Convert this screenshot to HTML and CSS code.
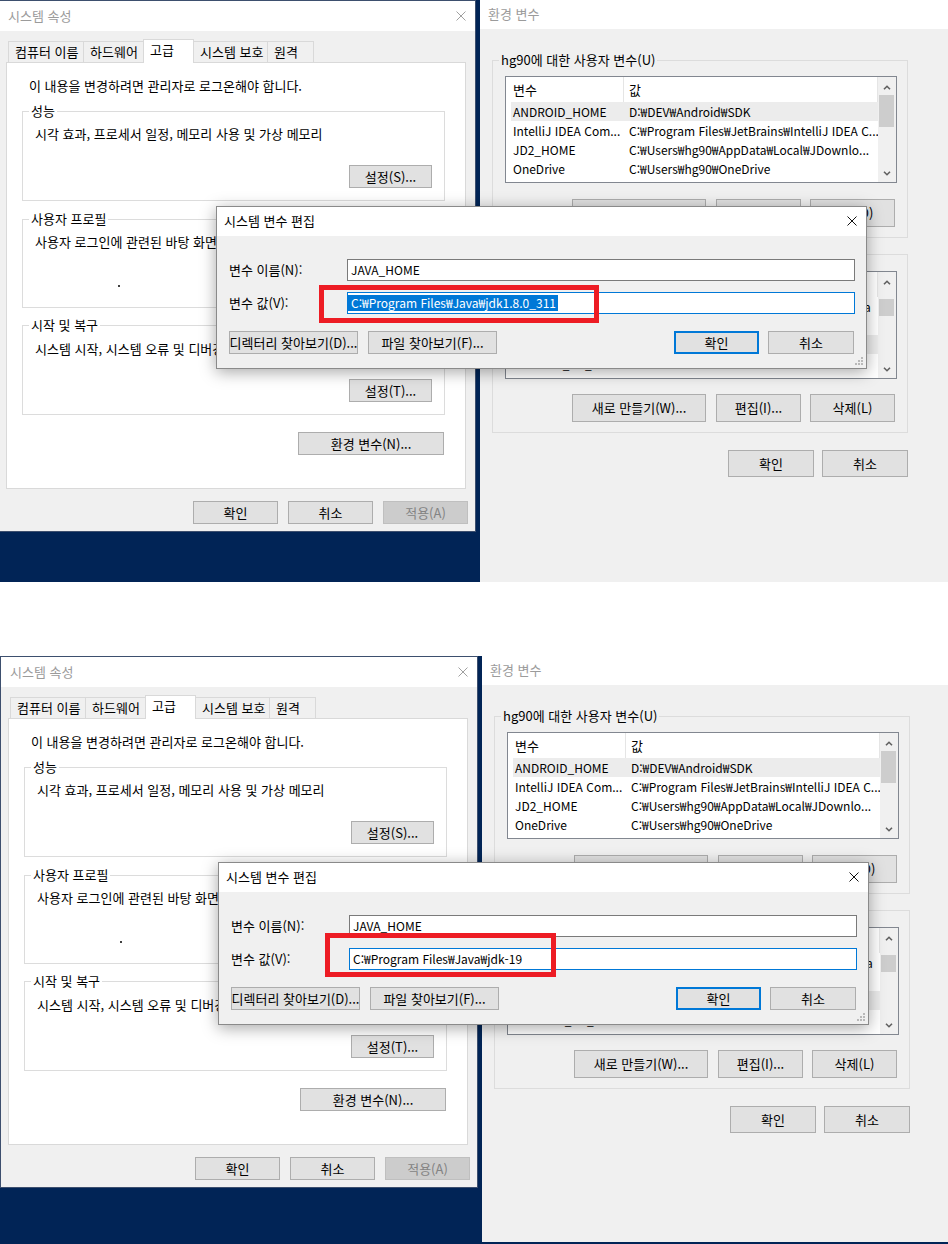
FILE: index.html
```html
<!DOCTYPE html>
<html lang="ko">
<head>
<meta charset="utf-8">
<title>시스템 변수 편집 - JAVA_HOME</title>
<link rel="stylesheet" href="styles.css">
</head>
<body>

<section class="shot shot-a">
  <div class="desk">
    <div class="win sys">
      <div class="titlebar sys-title">
        <span class="title-text">시스템 속성</span>
        <svg class="close" viewBox="0 0 10 10"><path d="M0.5 0.5L9.5 9.5M9.5 0.5L0.5 9.5"/></svg>
      </div>
      <div class="sys-body">
        <div class="tabs">
          <div class="tab t1">컴퓨터 이름</div>
          <div class="tab t2">하드웨어</div>
          <div class="tab t3 on">고급</div>
          <div class="tab t4">시스템 보호</div>
          <div class="tab t5">원격</div>
        </div>
        <div class="tabpanel">
          <p class="note">이 내용을 변경하려면 관리자로 로그온해야 합니다.</p>
          <div class="group g-perf">
            <div class="glabel">성능</div>
            <p class="gtext">시각 효과, 프로세서 일정, 메모리 사용 및 가상 메모리</p>
            <div class="gactions"><button type="button" class="btn btn-s">설정(S)...</button></div>
          </div>
          <div class="group g-prof">
            <div class="glabel">사용자 프로필</div>
            <p class="gtext">사용자 로그인에 관련된 바탕 화면 설정</p>
            <div class="gactions split"><span class="speck"></span><button type="button" class="btn btn-s">설정(E)...</button></div>
          </div>
          <div class="group g-boot">
            <div class="glabel">시작 및 복구</div>
            <p class="gtext">시스템 시작, 시스템 오류 및 디버깅 정보</p>
            <div class="gactions"><button type="button" class="btn btn-s">설정(T)...</button></div>
          </div>
          <div class="envbtn-row"><button type="button" class="btn btn-env">환경 변수(N)...</button></div>
        </div>
        <div class="sys-foot">
          <button type="button" class="btn btn-f">확인</button>
          <button type="button" class="btn btn-f">취소</button>
          <button type="button" class="btn btn-f disabled">적용(A)</button>
        </div>
      </div>
    </div>

    <div class="win env">
      <div class="titlebar env-title"><span class="title-text">환경 변수</span></div>
      <div class="env-body">
        <div class="group eg1">
          <div class="glabel">hg90에 대한 사용자 변수(U)</div>
          <div class="list list-user">
            <div class="list-main">
              <div class="lhead"><span class="c1">변수</span><span class="c2">값</span></div>
              <div class="lrow sel"><span class="c1">ANDROID_HOME</span><span class="c2">D:₩DEV₩Android₩SDK</span></div>
              <div class="lrow"><span class="c1">IntelliJ IDEA Com...</span><span class="c2">C:₩Program Files₩JetBrains₩IntelliJ IDEA C...</span></div>
              <div class="lrow"><span class="c1">JD2_HOME</span><span class="c2">C:₩Users₩hg90₩AppData₩Local₩JDownlo...</span></div>
              <div class="lrow"><span class="c1">OneDrive</span><span class="c2">C:₩Users₩hg90₩OneDrive</span></div>
              <div class="lrow"><span class="c1">Path</span><span class="c2">C:₩Users₩hg90₩AppData₩Local₩Microsoft₩WindowsApps;...</span></div>
            </div>
            <div class="vscroll">
              <span class="arr up"><svg viewBox="0 0 8 5"><path d="M1 4.3L4 1.3L7 4.3"/></svg></span>
              <span class="thumb"></span>
              <span class="arr down"><svg viewBox="0 0 8 5"><path d="M1 0.7L4 3.7L7 0.7"/></svg></span>
            </div>
          </div>
          <div class="ebtns">
            <button type="button" class="btn btn-e w-new">새로 만들기(N)...</button>
            <button type="button" class="btn btn-e">편집(E)...</button>
            <button type="button" class="btn btn-e">삭제(D)</button>
          </div>
        </div>
        <div class="group eg2">
          <div class="glabel">시스템 변수(S)</div>
          <div class="list list-sys">
            <div class="list-main">
              <div class="lhead"><span class="c1">변수</span><span class="c2">값</span></div>
              <div class="lrow"><span class="c1">DriverData</span><span class="c2">C:₩Windows₩System32₩Drivers₩DriverData</span></div>
              <div class="lrow"><span class="c1">GRADLE_HOME</span><span class="c2">C:₩Gradle₩gradle-7.4</span></div>
              <div class="lrow sel"><span class="c1">JAVA_HOME</span><span class="c2">C:₩Program Files₩Java₩jdk1.8.0_311</span></div>
              <div class="lrow"><span class="c1">NUMBER_OF_PROCESSORS</span><span class="c2">8</span></div>
              <div class="lrow"><span class="c1">OS</span><span class="c2">Windows_NT</span></div>
            </div>
            <div class="vscroll">
              <span class="arr up"><svg viewBox="0 0 8 5"><path d="M1 4.3L4 1.3L7 4.3"/></svg></span>
              <span class="thumb"></span>
              <span class="arr down"><svg viewBox="0 0 8 5"><path d="M1 0.7L4 3.7L7 0.7"/></svg></span>
            </div>
          </div>
          <div class="ebtns">
            <button type="button" class="btn btn-e w-new">새로 만들기(W)...</button>
            <button type="button" class="btn btn-e">편집(I)...</button>
            <button type="button" class="btn btn-e">삭제(L)</button>
          </div>
        </div>
        <div class="env-foot">
          <button type="button" class="btn btn-ef">확인</button>
          <button type="button" class="btn btn-ef">취소</button>
        </div>
      </div>
    </div>

    <div class="dlg">
      <div class="dlg-title">
        <span>시스템 변수 편집</span>
        <svg class="close dark" viewBox="0 0 10 10"><path d="M0.5 0.5L9.5 9.5M9.5 0.5L0.5 9.5"/></svg>
      </div>
      <div class="dlg-body">
        <div class="field"><span class="flabel">변수 이름(N):</span><div class="input">JAVA_HOME</div></div>
        <div class="field"><span class="flabel">변수 값(V):</span><div class="input focus"><span class="selected">C:₩Program Files₩Java₩jdk1.8.0_311</span></div></div>
        <div class="dlg-btns">
          <button type="button" class="btn btn-d wide">디렉터리 찾아보기(D)...</button>
          <button type="button" class="btn btn-d wide">파일 찾아보기(F)...</button>
          <span class="spacer"></span>
          <button type="button" class="btn btn-d ok default">확인</button>
          <button type="button" class="btn btn-d cancel">취소</button>
        </div>
      </div>
      <svg class="grip" viewBox="0 0 8 8"><path d="M6 0h2v2h-2zM3 3h2v2h-2zM6 3h2v2h-2zM0 6h2v2h-2zM3 6h2v2h-2zM6 6h2v2h-2z"/></svg>
    </div>

    <div class="mark mark-a"></div>
  </div>
</section>

<div class="gap"></div>

<section class="shot shot-b">
  <div class="desk desk-b">
    <div class="win sys">
      <div class="titlebar sys-title">
        <span class="title-text">시스템 속성</span>
        <svg class="close" viewBox="0 0 10 10"><path d="M0.5 0.5L9.5 9.5M9.5 0.5L0.5 9.5"/></svg>
      </div>
      <div class="sys-body">
        <div class="tabs">
          <div class="tab t1">컴퓨터 이름</div>
          <div class="tab t2">하드웨어</div>
          <div class="tab t3 on">고급</div>
          <div class="tab t4">시스템 보호</div>
          <div class="tab t5">원격</div>
        </div>
        <div class="tabpanel">
          <p class="note">이 내용을 변경하려면 관리자로 로그온해야 합니다.</p>
          <div class="group g-perf">
            <div class="glabel">성능</div>
            <p class="gtext">시각 효과, 프로세서 일정, 메모리 사용 및 가상 메모리</p>
            <div class="gactions"><button type="button" class="btn btn-s">설정(S)...</button></div>
          </div>
          <div class="group g-prof">
            <div class="glabel">사용자 프로필</div>
            <p class="gtext">사용자 로그인에 관련된 바탕 화면 설정</p>
            <div class="gactions split"><span class="speck"></span><button type="button" class="btn btn-s">설정(E)...</button></div>
          </div>
          <div class="group g-boot">
            <div class="glabel">시작 및 복구</div>
            <p class="gtext">시스템 시작, 시스템 오류 및 디버깅 정보</p>
            <div class="gactions"><button type="button" class="btn btn-s">설정(T)...</button></div>
          </div>
          <div class="envbtn-row"><button type="button" class="btn btn-env">환경 변수(N)...</button></div>
        </div>
        <div class="sys-foot">
          <button type="button" class="btn btn-f">확인</button>
          <button type="button" class="btn btn-f">취소</button>
          <button type="button" class="btn btn-f disabled">적용(A)</button>
        </div>
      </div>
    </div>

    <div class="win env">
      <div class="titlebar env-title"><span class="title-text">환경 변수</span></div>
      <div class="env-body">
        <div class="group eg1">
          <div class="glabel">hg90에 대한 사용자 변수(U)</div>
          <div class="list list-user">
            <div class="list-main">
              <div class="lhead"><span class="c1">변수</span><span class="c2">값</span></div>
              <div class="lrow sel"><span class="c1">ANDROID_HOME</span><span class="c2">D:₩DEV₩Android₩SDK</span></div>
              <div class="lrow"><span class="c1">IntelliJ IDEA Com...</span><span class="c2">C:₩Program Files₩JetBrains₩IntelliJ IDEA C...</span></div>
              <div class="lrow"><span class="c1">JD2_HOME</span><span class="c2">C:₩Users₩hg90₩AppData₩Local₩JDownlo...</span></div>
              <div class="lrow"><span class="c1">OneDrive</span><span class="c2">C:₩Users₩hg90₩OneDrive</span></div>
              <div class="lrow"><span class="c1">Path</span><span class="c2">C:₩Users₩hg90₩AppData₩Local₩Microsoft₩WindowsApps;...</span></div>
            </div>
            <div class="vscroll">
              <span class="arr up"><svg viewBox="0 0 8 5"><path d="M1 4.3L4 1.3L7 4.3"/></svg></span>
              <span class="thumb"></span>
              <span class="arr down"><svg viewBox="0 0 8 5"><path d="M1 0.7L4 3.7L7 0.7"/></svg></span>
            </div>
          </div>
          <div class="ebtns">
            <button type="button" class="btn btn-e w-new">새로 만들기(N)...</button>
            <button type="button" class="btn btn-e">편집(E)...</button>
            <button type="button" class="btn btn-e">삭제(D)</button>
          </div>
        </div>
        <div class="group eg2">
          <div class="glabel">시스템 변수(S)</div>
          <div class="list list-sys">
            <div class="list-main">
              <div class="lhead"><span class="c1">변수</span><span class="c2">값</span></div>
              <div class="lrow"><span class="c1">DriverData</span><span class="c2">C:₩Windows₩System32₩Drivers₩DriverData</span></div>
              <div class="lrow"><span class="c1">GRADLE_HOME</span><span class="c2">C:₩Gradle₩gradle-7.4</span></div>
              <div class="lrow sel"><span class="c1">JAVA_HOME</span><span class="c2">C:₩Program Files₩Java₩jdk-19</span></div>
              <div class="lrow"><span class="c1">NUMBER_OF_PROCESSORS</span><span class="c2">8</span></div>
              <div class="lrow"><span class="c1">OS</span><span class="c2">Windows_NT</span></div>
            </div>
            <div class="vscroll">
              <span class="arr up"><svg viewBox="0 0 8 5"><path d="M1 4.3L4 1.3L7 4.3"/></svg></span>
              <span class="thumb"></span>
              <span class="arr down"><svg viewBox="0 0 8 5"><path d="M1 0.7L4 3.7L7 0.7"/></svg></span>
            </div>
          </div>
          <div class="ebtns">
            <button type="button" class="btn btn-e w-new">새로 만들기(W)...</button>
            <button type="button" class="btn btn-e">편집(I)...</button>
            <button type="button" class="btn btn-e">삭제(L)</button>
          </div>
        </div>
        <div class="env-foot">
          <button type="button" class="btn btn-ef">확인</button>
          <button type="button" class="btn btn-ef">취소</button>
        </div>
      </div>
    </div>

    <div class="dlg">
      <div class="dlg-title">
        <span>시스템 변수 편집</span>
        <svg class="close dark" viewBox="0 0 10 10"><path d="M0.5 0.5L9.5 9.5M9.5 0.5L0.5 9.5"/></svg>
      </div>
      <div class="dlg-body">
        <div class="field"><span class="flabel">변수 이름(N):</span><div class="input">JAVA_HOME</div></div>
        <div class="field"><span class="flabel">변수 값(V):</span><div class="input focus plain">C:₩Program Files₩Java₩jdk-19</div></div>
        <div class="dlg-btns">
          <button type="button" class="btn btn-d wide">디렉터리 찾아보기(D)...</button>
          <button type="button" class="btn btn-d wide">파일 찾아보기(F)...</button>
          <span class="spacer"></span>
          <button type="button" class="btn btn-d ok default">확인</button>
          <button type="button" class="btn btn-d cancel">취소</button>
        </div>
      </div>
      <svg class="grip" viewBox="0 0 8 8"><path d="M6 0h2v2h-2zM3 3h2v2h-2zM6 3h2v2h-2zM0 6h2v2h-2zM3 6h2v2h-2zM6 6h2v2h-2z"/></svg>
    </div>

    <div class="mark mark-b"></div>
  </div>
</section>

</body>
</html>
```

FILE: styles.css
```css
* { box-sizing: border-box; }

html, body {
  margin: 0;
  padding: 0;
  background: #ffffff;
}

body {
  width: 948px;
  font-family: "Noto Sans CJK KR", "Noto Sans", sans-serif;
  font-size: 13px;
  line-height: 16px;
  color: #000000;
}

p { margin: 0; }

/* ---------- screenshots ---------- */
.shot {
  position: relative;
  width: 948px;
  overflow: hidden;
  background: #012456;
}
.shot-a { height: 582px; }
.shot-b { height: 588px; }
.gap { height: 74px; background: #ffffff; }

.desk {
  position: relative;
  width: 948px;
  height: 100%;
}
.desk-b { margin-left: 2px; }

.win { position: absolute; }

/* ---------- common controls ---------- */
.titlebar {
  display: flex;
  align-items: center;
  background: #ffffff;
  flex: none;
}
.title-text { color: #9b9b9b; white-space: nowrap; }

.close {
  width: 10px;
  height: 10px;
  margin-left: auto;
  fill: none;
  stroke: #a0a0a0;
  stroke-width: 1;
}
.close.dark { stroke: #111111; }

.btn {
  appearance: none;
  -webkit-appearance: none;
  display: flex;
  align-items: center;
  justify-content: center;
  margin: 0;
  padding: 0;
  font: inherit;
  line-height: 16px;
  color: #000000;
  background: #e1e1e1;
  border: 1px solid #adadad;
  border-radius: 0;
  white-space: nowrap;
  flex: none;
}
.btn.default { border: 2px solid #0078d7; }
.btn.disabled { background: #cccccc; border-color: #bfbfbf; color: #838383; }

.group {
  border: 1px solid #dcdcdc;
  flex: none;
}
.glabel {
  display: block;
  width: fit-content;
  height: 16px;
  margin: -9px 0 0 6px;
  padding: 0 2px;
  line-height: 16px;
  background: #ffffff;
  white-space: nowrap;
}

/* ---------- 시스템 속성 window ---------- */
.sys {
  left: -2px;
  top: 0;
  width: 478px;
  height: 532px;
  border: 1px solid #3d4f6e;
  background: #f0f0f0;
  display: flex;
  flex-direction: column;
  z-index: 1;
}
.sys-title { height: 30px; padding-left: 9px; }
.sys-title .close { margin-right: 9px; }

.sys-body {
  flex: 1;
  padding: 8px 7px 0 7px;
}

.tabs {
  display: flex;
  align-items: flex-end;
  height: 23px;
  padding-left: 2px;
  position: relative;
  z-index: 1;
}
.tab {
  height: 21px;
  display: flex;
  align-items: center;
  padding-left: 6px;
  border: 1px solid #d9d9d9;
  border-bottom: 0;
  background: #f0f0f0;
  white-space: nowrap;
}
.tab + .tab { margin-left: -1px; }
.t1 { width: 76px; }
.t2 { width: 61px; }
.t3 { width: 51px; }
.t4 { width: 75px; }
.t5 { width: 47px; }
.tab.on {
  height: 24px;
  margin-bottom: -1px;
  padding-bottom: 3px;
  background: #ffffff;
  position: relative;
  z-index: 2;
}

.tabpanel {
  width: 460px;
  height: 427px;
  background: #ffffff;
  border: 1px solid #d9d9d9;
  padding: 15px 20px 0 15px;
  display: flex;
  flex-direction: column;
}
.note { margin-left: 7px; white-space: nowrap; }

.g-perf { margin-top: 17px; height: 90px; }
.g-prof { margin-top: 18px; height: 89px; }
.g-boot { margin-top: 17px; height: 90px; }

.gtext { margin: 7px 0 0 12px; white-space: nowrap; }
.g-boot .gtext { margin-top: 8px; }

.gactions {
  display: flex;
  justify-content: flex-end;
  align-items: center;
  margin-top: 23px;
  padding-right: 12px;
}
.g-boot .gactions { margin-top: 22px; }
.gactions.split { justify-content: space-between; margin-top: 24px; }
.speck {
  width: 2px;
  height: 2px;
  margin-left: 95px;
  background: #404040;
}

.btn-s { width: 83px; height: 23px; }

.envbtn-row {
  display: flex;
  justify-content: flex-end;
  margin-top: 17px;
  padding-right: 1px;
}
.btn-env { width: 146px; height: 23px; }

.sys-foot {
  display: flex;
  justify-content: flex-end;
  gap: 10px;
  margin-top: 12px;
}
.btn-f { width: 85px; height: 23px; }

/* ---------- 환경 변수 window ---------- */
.env {
  left: 480px;
  top: -2px;
  width: 470px;
  height: 588px;
  background: #f0f0f0;
  display: flex;
  flex-direction: column;
}
.env-title { height: 31px; padding-left: 8px; }

.env-body {
  flex: 1;
  padding-left: 12px;
  display: flex;
  flex-direction: column;
}
.env .glabel { background: #f0f0f0; }

.eg1 { margin-top: 31px; width: 416px; height: 178px; }
.eg2 { margin-top: 16px; width: 416px; height: 179px; }

.list {
  display: flex;
  width: 392px;
  margin-left: 12px;
  border: 1px solid #828790;
  background: #ffffff;
  overflow: hidden;
}
.list-user { margin-top: 8px; height: 107px; }
.list-sys { margin-top: 9px; height: 108px; }

.list-main {
  width: 372px;
  overflow: hidden;
  flex: none;
}
.lhead {
  height: 25px;
  display: flex;
  border-right: 1px solid #e5e5e5;
}
.lhead span {
  display: flex;
  align-items: center;
  height: 25px;
}
.lhead .c1 { width: 118px; padding-left: 7px; border-right: 1px solid #e5e5e5; }
.lhead .c2 { padding-left: 5px; }

.lrow {
  height: 19px;
  display: flex;
  align-items: center;
  margin-left: 5px;
  white-space: nowrap;
  font-size: 12px;
}
.lrow span { overflow: hidden; }
.lrow .c1 { width: 113px; padding-left: 2px; flex: none; }
.lrow .c2 { padding-left: 5px; flex: 1; }
.lrow.sel { background: #ececec; }

.vscroll {
  width: 18px;
  flex: none;
  display: flex;
  flex-direction: column;
  background: #f0f0f0;
}
.arr {
  height: 17px;
  display: flex;
  align-items: center;
  justify-content: center;
  flex: none;
}
.arr.up { padding-top: 3px; }
.arr.down { margin-top: auto; }
.arr svg {
  width: 8px;
  height: 5px;
  fill: none;
  stroke: #606060;
  stroke-width: 1.6;
}
.thumb {
  width: 15px;
  margin-left: 1px;
  background: #cdcdcd;
  flex: none;
}
.list-user .thumb { margin-top: 1px; height: 32px; }
.list-sys .thumb { margin-top: 10px; height: 17px; }

.ebtns {
  display: flex;
  margin-left: 79px;
}
.eg1 .ebtns { margin-top: 16px; }
.eg2 .ebtns { margin-top: 15px; }
.btn-e { width: 85px; height: 28px; }
.btn-e.w-new { width: 134px; }
.btn-e + .btn-e { margin-left: 10px; }
.btn-e + .btn-e + .btn-e { margin-left: 9px; }

.env-foot {
  display: flex;
  gap: 8px;
  margin: 17px 0 0 236px;
}
.btn-ef { width: 86px; height: 27px; }

/* ---------- 시스템 변수 편집 dialog ---------- */
.dlg {
  position: absolute;
  left: 216px;
  top: 206px;
  width: 651px;
  height: 163px;
  border: 1px solid #8a8a8a;
  background: #f0f0f0;
  box-shadow: 0 3px 15px rgba(0, 0, 0, 0.35);
  display: flex;
  flex-direction: column;
  z-index: 5;
}
.dlg-title {
  height: 29px;
  padding: 0 0 2px 7px;
  display: flex;
  align-items: center;
  background: #ffffff;
  white-space: nowrap;
  flex: none;
}
.dlg-title .close { margin-right: 9px; }

.dlg-body {
  flex: 1;
  padding: 23px 11px 0 12px;
}
.field {
  display: flex;
  align-items: center;
  height: 22px;
}
.field + .field { margin-top: 11px; }
.flabel { width: 118px; flex: none; white-space: nowrap; }
.input {
  width: 508px;
  height: 22px;
  flex: none;
  display: flex;
  align-items: center;
  padding-left: 3px;
  border: 1px solid #7a7a7a;
  background: #ffffff;
  white-space: nowrap;
  font-size: 12px;
}
.input.focus { border-color: #0078d7; padding-left: 0; }
.input.focus.plain { padding-left: 3px; }
.selected {
  background: #0078d7;
  color: #ffffff;
  padding: 0 2px 0 3px;
  line-height: 16px;
}

.dlg-btns {
  display: flex;
  height: 23px;
  margin-top: 17px;
}
.btn-d { height: 23px; }
.btn-d.wide { width: 129px; }
.btn-d.wide + .btn-d.wide { margin-left: 10px; }
.spacer { flex: 1; }
.btn-d.ok { width: 85px; }
.btn-d.cancel { width: 86px; margin-left: 9px; margin-right: 1px; }

.grip {
  position: absolute;
  right: 3px;
  bottom: 3px;
  width: 8px;
  height: 8px;
  fill: #b9b9b9;
}

/* ---------- red highlight ---------- */
.mark {
  position: absolute;
  border: 5px solid #ed1c24;
  z-index: 6;
}
.mark-a { left: 319px; top: 285px; width: 280px; height: 38px; }
.mark-b { left: 323px; top: 277px; width: 231px; height: 44px; }
```
